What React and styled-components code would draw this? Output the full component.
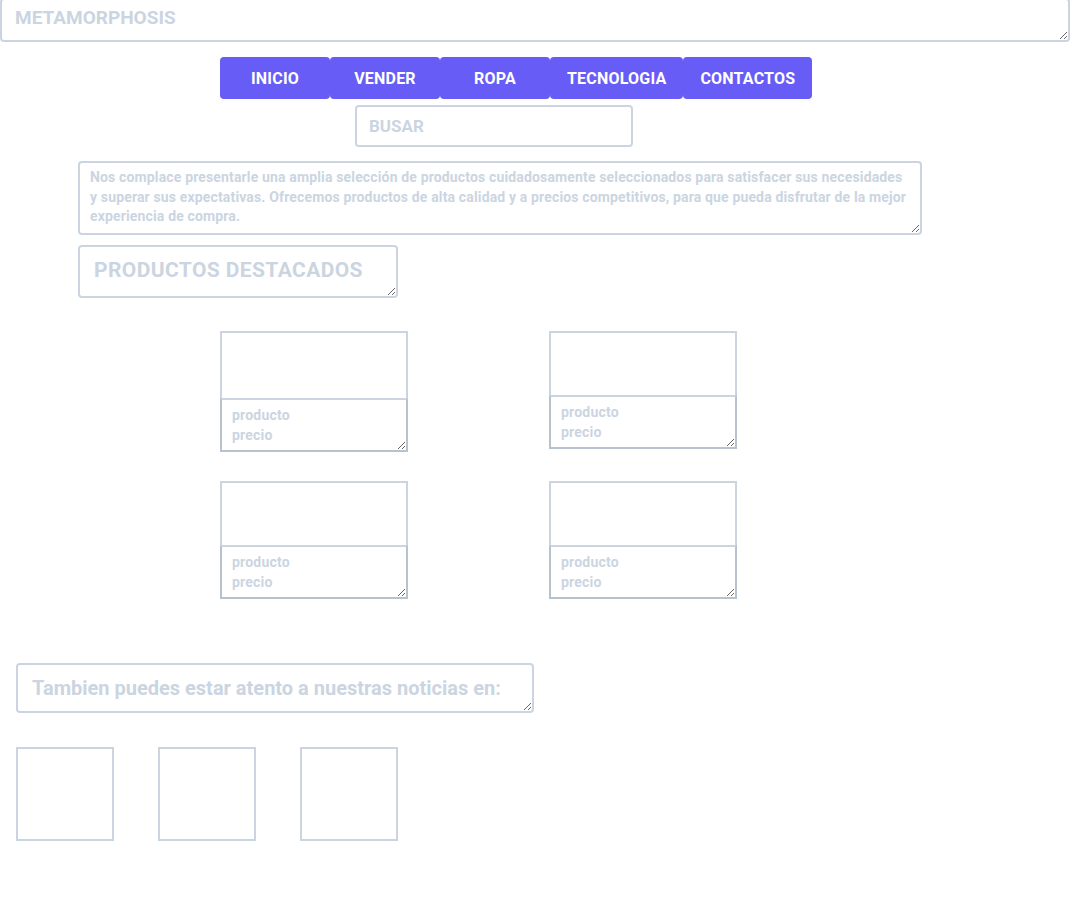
import React from "react";
import styled, { createGlobalStyle, css } from "styled-components";

const Global = createGlobalStyle`
  html, body {
    margin: 0;
    padding: 0;
    background: #ffffff;
    overflow: hidden;
  }
  body {
    font-family: Roboto, "Liberation Sans", Arial, sans-serif;
  }
  * { box-sizing: border-box; }
`;

const line = "#cbd5e1";
const textTone = "#cbd5e1";

const fieldBase = css`
  display: block;
  border: 2px solid ${line};
  border-radius: 4px;
  background: #fff;
  color: ${textTone};
  font-family: Roboto, "Liberation Sans", Arial, sans-serif;
  font-weight: 700;
  outline: none;
  margin: 0;
  &::placeholder { color: ${textTone}; opacity: 1; }
`;

const Page = styled.div`
  display: flex;
  flex-direction: column;
  align-items: flex-start;
  padding-bottom: 40px;
`;

const TitleField = styled.textarea`
  ${fieldBase};
  width: 1070px;
  height: 44px;
  margin-top: -2px;
  padding: 6px 13px;
  font-size: 19px;
  line-height: 24px;
  overflow: hidden;
`;

const Nav = styled.nav`
  display: flex;
  margin: 15px 0 0 220px;
`;

const NavButton = styled.button`
  height: 42px;
  min-width: 110px;
  padding: 1px 17px 0;
  border: none;
  border-radius: 4px;
  background: #685cf6;
  color: #ffffff;
  font-family: Roboto, "Liberation Sans", Arial, sans-serif;
  font-weight: 700;
  font-size: 16px;
  letter-spacing: 0.2px;
  cursor: pointer;
`;

const SearchInput = styled.input`
  ${fieldBase};
  width: 278px;
  height: 42px;
  margin: 6px 0 0 355px;
  padding: 0 12px;
  font-size: 17px;
`;

const Description = styled.textarea`
  ${fieldBase};
  width: 844px;
  height: 74px;
  margin: 14px 0 0 78px;
  padding: 5px 10px;
  font-size: 14px;
  letter-spacing: 0.15px;
  line-height: 19.5px;
  white-space: pre;
  overflow: hidden;
`;

const SectionLabel = styled.textarea`
  ${fieldBase};
  width: ${(p) => p.$w}px;
  height: ${(p) => p.$h}px;
  margin: ${(p) => p.$top}px 0 0 ${(p) => p.$left}px;
  padding: ${(p) => p.$padTop}px 14px 0;
  font-size: ${(p) => p.$size}px;
  letter-spacing: ${(p) => p.$ls}px;
  line-height: 26px;
  overflow: hidden;
`;

const CardGrid = styled.div`
  display: grid;
  grid-template-columns: 188px 188px;
  column-gap: 141px;
  row-gap: 29px;
  align-items: start;
  margin: 33px 0 0 220px;
`;

const Card = styled.div`
  display: flex;
  flex-direction: column;
`;

const CardImage = styled.div`
  height: ${(p) => (p.$tall ? 69 : 66)}px;
  border: 2px solid ${line};
  background: #fff;
`;

const CardText = styled.textarea`
  ${fieldBase};
  width: 188px;
  height: 54px;
  margin-top: -2px;
  border-radius: 0;
  border-color: ${line} #b6c2ce #b6c2ce #b6c2ce;
  padding: 5px 10px;
  font-size: 14px;
  letter-spacing: 0.2px;
  line-height: 20px;
  white-space: pre;
  overflow: hidden;
`;

const SocialRow = styled.div`
  display: flex;
  gap: 44px;
  margin: 34px 0 0 16px;
`;

const SocialBox = styled.div`
  width: 98px;
  height: 94px;
  border: 2px solid ${line};
  background: #fff;
`;

const descText =
  "Nos complace presentarle una amplia selección de productos cuidadosamente seleccionados para satisfacer sus necesidades\n" +
  "y superar sus expectativas. Ofrecemos productos de alta calidad y a precios competitivos, para que pueda disfrutar de la mejor\n" +
  "experiencia de compra.";

const navItems = ["INICIO", "VENDER", "ROPA", "TECNOLOGIA", "CONTACTOS"];
const cards = [{ tall: true }, { tall: false }, { tall: false }, { tall: false }];

export default function App() {
  return (
    <>
      <Global />
      <Page>
        <TitleField readOnly defaultValue="METAMORPHOSIS" />
        <Nav>
          {navItems.map((n) => (
            <NavButton key={n}>{n}</NavButton>
          ))}
        </Nav>
        <SearchInput placeholder="BUSAR" />
        <Description readOnly wrap="off" defaultValue={descText} />
        <SectionLabel
          readOnly
          $w={320}
          $h={53}
          $top={10}
          $left={78}
          $size={21}
          $ls={0.4}
          $padTop={9.5}
          defaultValue="PRODUCTOS DESTACADOS"
        />
        <CardGrid>
          {cards.map((c, i) => (
            <Card key={i}>
              <CardImage $tall={c.tall} />
              <CardText readOnly wrap="off" defaultValue={"producto\nprecio"} />
            </Card>
          ))}
        </CardGrid>
        <SectionLabel
          readOnly
          $w={518}
          $h={50}
          $top={64}
          $left={16}
          $size={20}
          $ls={0}
          $padTop={10}
          defaultValue="Tambien puedes estar atento a nuestras noticias en:"
        />
        <SocialRow>
          <SocialBox />
          <SocialBox />
          <SocialBox />
        </SocialRow>
      </Page>
    </>
  );
}
